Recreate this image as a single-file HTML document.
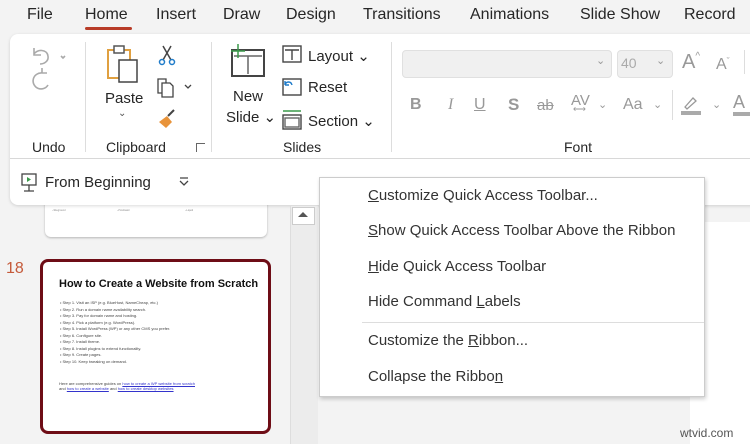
<!DOCTYPE html>
<html><head><meta charset="utf-8"><style>
*{margin:0;padding:0;box-sizing:border-box}
body{width:750px;height:444px;overflow:hidden;background:#f3f3f3;font-family:"Liberation Sans",sans-serif;color:#262626;position:relative}
.a{position:absolute;white-space:nowrap}
.tab{font-size:16px;top:6px}
.lbl{font-size:14px;color:#262626}
.mi{font-size:15px;color:#333;left:368px}
.mi u{text-decoration:underline}
.gl{position:absolute;width:1px;background:#ddd}
.small{font-size:2.5px;color:#888;line-height:4px}
</style></head><body>
<div class="a tab" style="left:27px">File</div>
<div class="a tab" style="left:85px">Home</div>
<div class="a" style="left:85px;top:27px;width:47px;height:3px;background:#b83c28;border-radius:2px"></div>
<div class="a tab" style="left:156px">Insert</div>
<div class="a tab" style="left:223px">Draw</div>
<div class="a tab" style="left:286px">Design</div>
<div class="a tab" style="left:363px">Transitions</div>
<div class="a tab" style="left:470px">Animations</div>
<div class="a tab" style="left:580px">Slide Show</div>
<div class="a tab" style="left:684px">Record</div>

<div class="a" style="left:45px;top:190px;width:222px;height:47px;background:#fff;border-radius:0 0 6px 6px;box-shadow:0 1px 2px rgba(0,0,0,.25)"></div>
<div class="a small" style="left:52px;top:209px">~Siteground</div>
<div class="a small" style="left:117px;top:209px">~HostGator</div>
<div class="a small" style="left:185px;top:209px">~Liquid</div>

<div class="a" style="left:10px;top:34px;width:750px;height:171px;background:#fff;border-radius:8px;box-shadow:0 1px 3px rgba(0,0,0,.15)"></div>
<div class="a" style="left:10px;top:158px;width:740px;height:1px;background:#d8d8d8"></div>
<div class="gl" style="left:85px;top:42px;height:110px"></div>
<div class="gl" style="left:211px;top:42px;height:110px"></div>
<div class="gl" style="left:391px;top:42px;height:110px"></div>

<svg class="a" style="left:28px;top:42px" width="40" height="60" viewBox="0 0 40 60" fill="none" stroke="#aaa" stroke-width="1.6"><path d="M6 6v7h7M6 12c3-5 13-5 14 2c1 6-5 8-8 8"/><path d="M33 14l2 2l2-2"/><path d="M20 43a8 8 0 1 1-6-12M14 31v-5M14 31h5"/></svg>
<div class="a lbl" style="left:32px;top:139px">Undo</div>

<svg class="a" style="left:104px;top:44px" width="40" height="40" viewBox="0 0 40 40"><rect x="4" y="6" width="22" height="28" fill="#fff" stroke="#e0a040" stroke-width="2"/><rect x="10" y="2" width="10" height="7" fill="#fff" stroke="#555" stroke-width="1.5"/><rect x="15" y="16" width="18" height="22" fill="#fff" stroke="#444" stroke-width="1.5"/></svg>
<div class="a lbl" style="left:105px;top:90px;font-size:15px">Paste</div>
<div class="a" style="left:118px;top:108px;font-size:10px;color:#555">⌄</div>
<svg class="a" style="left:157px;top:44px" width="20" height="22" viewBox="0 0 20 22" fill="none" stroke-width="1.5"><path d="M6 2l8 14M14 2l-8 14" stroke="#444"/><circle cx="5" cy="18" r="2.5" stroke="#1e7bc9"/><circle cx="15" cy="18" r="2.5" stroke="#1e7bc9"/></svg>
<svg class="a" style="left:155px;top:76px" width="40" height="22" viewBox="0 0 40 22" fill="none" stroke="#444" stroke-width="1.3"><path d="M3 3h8v14H3z"/><path d="M7 7h8l3 3v11H7z" fill="#fff"/><path d="M30 9l3 3l3-3"/></svg>
<svg class="a" style="left:157px;top:108px" width="20" height="22" viewBox="0 0 20 22"><path d="M2 14l8-6l5 6l-6 6z" fill="#e8933a"/><path d="M11 8l6-6" stroke="#444" stroke-width="2"/></svg>
<div class="a lbl" style="left:106px;top:139px">Clipboard</div>
<div class="a" style="left:196px;top:143px;width:9px;height:9px;border:1px solid #666;border-width:1px 0 0 1px"></div>

<svg class="a" style="left:228px;top:42px" width="40" height="36" viewBox="0 0 40 36" fill="none"><rect x="4" y="8" width="32" height="26" stroke="#444" stroke-width="2"/><path d="M6 14h28M20 14v18" stroke="#666" stroke-width="1.5"/><path d="M10 2v14M3 9h14" stroke="#3a9a4a" stroke-width="1.5"/></svg>
<div class="a lbl" style="left:233px;top:88px;font-size:15px">New</div>
<div class="a lbl" style="left:226px;top:108px;font-size:15px">Slide ⌄</div>
<svg class="a" style="left:282px;top:45px" width="20" height="20" viewBox="0 0 20 20" fill="none" stroke="#444" stroke-width="1.4"><rect x="1" y="1" width="18" height="16"/><path d="M3 5h14M10 5v10"/></svg>
<div class="a lbl" style="left:308px;top:47px;font-size:15px">Layout ⌄</div>
<svg class="a" style="left:282px;top:77px" width="20" height="20" viewBox="0 0 20 20" fill="none" stroke-width="1.4"><rect x="1" y="2" width="18" height="16" stroke="#444"/><path d="M3 8c1-4 6-4 7 0M3 8V4M3 8h4" stroke="#1e7bc9"/></svg>
<div class="a lbl" style="left:308px;top:79px;font-size:15px">Reset</div>
<svg class="a" style="left:282px;top:109px" width="20" height="22" viewBox="0 0 20 22" fill="none" stroke-width="1.4"><path d="M1 2h18" stroke="#3a9a4a"/><rect x="1" y="6" width="18" height="14" stroke="#444"/><rect x="3" y="9" width="14" height="9" stroke="#666"/></svg>
<div class="a lbl" style="left:308px;top:112px;font-size:15px">Section ⌄</div>
<div class="a lbl" style="left:283px;top:139px">Slides</div>

<div class="a" style="left:402px;top:50px;width:210px;height:28px;background:#f0f0f0;border:1px solid #e0e0e0;border-radius:4px"></div>
<div class="a" style="left:596px;top:54px;font-size:11px;color:#999">⌄</div>
<div class="a" style="left:617px;top:50px;width:56px;height:28px;background:#f0f0f0;border:1px solid #e0e0e0;border-radius:4px"></div>
<div class="a" style="left:621px;top:55px;font-size:14px;color:#aaa">40</div>
<div class="a" style="left:656px;top:54px;font-size:11px;color:#999">⌄</div>
<div class="a" style="left:682px;top:51px;font-size:20px;color:#999">A<span style="font-size:10px;vertical-align:top">^</span></div>
<div class="a" style="left:716px;top:56px;font-size:16px;color:#999">A<span style="font-size:9px;vertical-align:top">ˇ</span></div>
<div class="gl" style="left:744px;top:50px;height:24px"></div>
<div class="a" style="left:410px;top:96px;font-size:16px;color:#999;font-weight:bold">B</div>
<div class="a" style="left:448px;top:96px;font-size:16px;color:#999;font-style:italic;font-family:'Liberation Serif',serif">I</div>
<div class="a" style="left:474px;top:96px;font-size:16px;color:#999;text-decoration:underline">U</div>
<div class="a" style="left:508px;top:95px;font-size:17px;color:#999;font-weight:bold">S</div>
<div class="a" style="left:537px;top:97px;font-size:15px;color:#999;text-decoration:line-through">ab</div>
<div class="a" style="left:571px;top:92px;font-size:15px;color:#999">AV</div>
<div class="a" style="left:573px;top:104px;font-size:9px;color:#999">⟷</div>
<div class="a" style="left:598px;top:98px;font-size:11px;color:#999">⌄</div>
<div class="a" style="left:623px;top:96px;font-size:16px;color:#999">Aa</div>
<div class="a" style="left:653px;top:98px;font-size:11px;color:#999">⌄</div>
<div class="gl" style="left:672px;top:90px;height:30px"></div>
<svg class="a" style="left:680px;top:94px" width="22" height="22" viewBox="0 0 22 22"><path d="M5 13l8-9l3 3l-9 8z" fill="none" stroke="#999" stroke-width="1.3"/><rect x="1" y="17" width="20" height="4" fill="#aaa"/></svg>
<div class="a" style="left:712px;top:98px;font-size:11px;color:#999">⌄</div>
<div class="a" style="left:733px;top:92px;font-size:18px;color:#999">A</div>
<div class="a" style="left:733px;top:112px;width:17px;height:4px;background:#aaa"></div>
<div class="a lbl" style="left:564px;top:139px">Font</div>

<svg class="a" style="left:20px;top:173px" width="18" height="20" viewBox="0 0 18 20" fill="none" stroke="#444" stroke-width="1.3"><rect x="2" y="1" width="14" height="11"/><path d="M7 4v5l4-2.5z" fill="#3a9a4a" stroke="none"/><path d="M9 12v6M4 18h10"/></svg>
<div class="a" style="left:45px;top:174px;font-size:15px">From Beginning</div>
<svg class="a" style="left:178px;top:177px" width="12" height="10" viewBox="0 0 12 10" fill="none" stroke="#444" stroke-width="1.3"><path d="M2 1h8M2 4l4 4l4-4"/></svg>

<div class="a" style="left:6px;top:260px;font-size:16px;color:#c55a3a">18</div>
<div class="a" style="left:40px;top:259px;width:231px;height:175px;background:#fff;border:3px solid #6e0d16;border-radius:8px"></div>
<div class="a" style="left:59px;top:278px;font-size:11px;font-weight:bold;color:#111">How to Create a Website from Scratch</div>
<div class="a" style="left:60px;top:300px;font-size:4px;line-height:6.5px;color:#444">
• Step 1. Visit an ISP (e.g. BlueHost, NameCheap, etc.)<br>• Step 2. Run a domain name availability search.<br>• Step 3. Pay for domain name and hosting.<br>• Step 4. Pick a platform (e.g. WordPress).<br>• Step 5. Install WordPress (WP) or any other CMS you prefer.<br>• Step 6. Configure site.<br>• Step 7. Install theme.<br>• Step 8. Install plugins to extend functionality.<br>• Step 9. Create pages.<br>• Step 10. Keep tweaking on demand.</div>
<div class="a" style="left:59px;top:381px;font-size:4px;line-height:5px;color:#444">Here are comprehensive guides on <span style="color:#33c;text-decoration:underline">how to create a WP website from scratch</span><br>and <span style="color:#33c;text-decoration:underline">how to create a website</span> and <span style="color:#33c;text-decoration:underline">how to create desktop websites</span></div>

<div class="a" style="left:290px;top:205px;width:28px;height:239px;background:#ececec;border-left:1px solid #ddd"></div>
<div class="a" style="left:292px;top:207px;width:23px;height:18px;background:#fff;border:1px solid #ccc"></div>
<div class="a" style="left:298px;top:212px;width:0;height:0;border-left:5px solid transparent;border-right:5px solid transparent;border-bottom:5px solid #555"></div>
<div class="a" style="left:290px;top:205px;width:460px;height:1px;background:#ddd"></div>
<div class="a" style="left:690px;top:222px;width:60px;height:222px;background:#fff"></div>
<div class="a" style="left:680px;top:426px;font-size:12px;color:#555">wtvid.com</div>

<div class="a" style="left:319px;top:177px;width:386px;height:220px;background:#fff;border:1px solid #ccc;box-shadow:1px 2px 4px rgba(0,0,0,.2)"></div>
<div class="a mi" style="top:187px"><u>C</u>ustomize Quick Access Toolbar...</div>
<div class="a mi" style="top:222px"><u>S</u>how Quick Access Toolbar Above the Ribbon</div>
<div class="a mi" style="top:258px"><u>H</u>ide Quick Access Toolbar</div>
<div class="a mi" style="top:293px">Hide Command <u>L</u>abels</div>
<div class="a" style="left:362px;top:322px;width:342px;height:1px;background:#ddd"></div>
<div class="a mi" style="top:332px">Customize the <u>R</u>ibbon...</div>
<div class="a mi" style="top:368px">Collapse the Ribbo<u>n</u></div>
</body></html>
